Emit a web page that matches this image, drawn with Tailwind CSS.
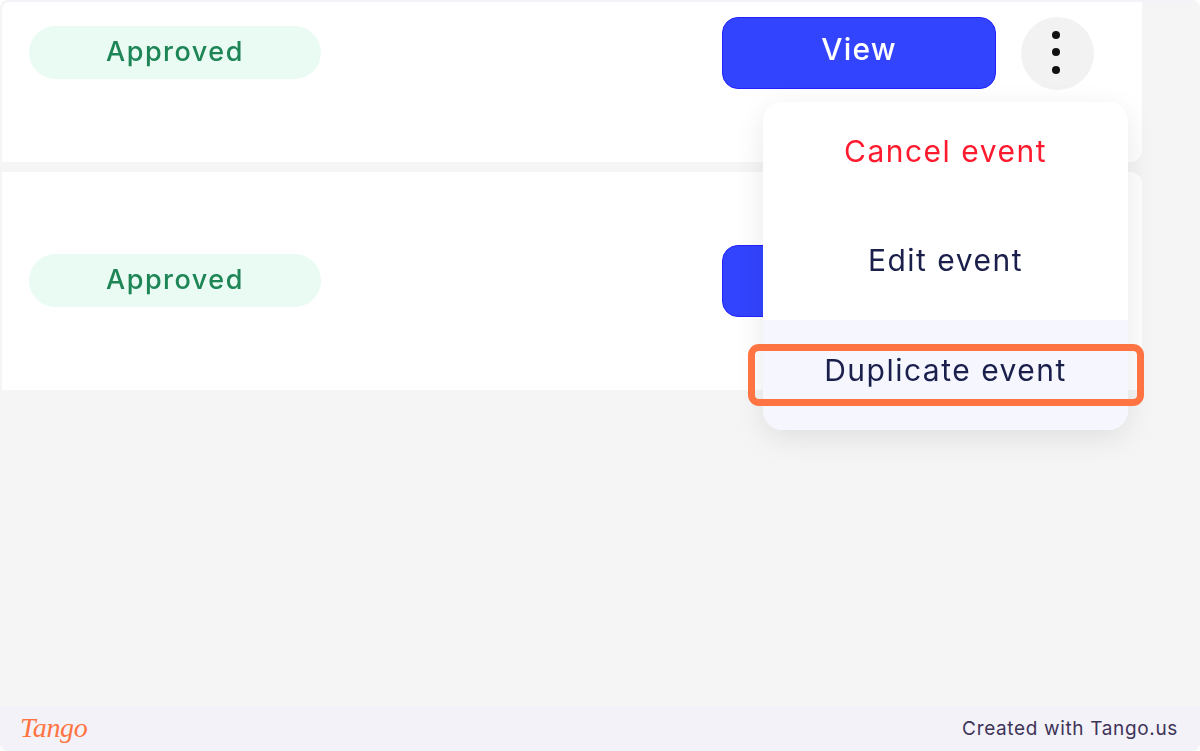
<!DOCTYPE html>
<html lang="en">
  <head>
    <meta charset="UTF-8" />
    <meta name="viewport" content="width=device-width, initial-scale=1.0" />
    <title>Duplicate event</title>
    <script src="https://cdn.jsdelivr.net/npm/@tailwindcss/browser@4"></script>
  </head>
  <body class="bg-white font-['Inter',sans-serif]">
    <div class="relative flex h-[751px] w-[1200px] flex-col overflow-hidden rounded-lg bg-[#f5f5f5]">
      <!-- event list -->
      <div class="flex-1 pl-[2px] pt-[2px] shadow-[inset_0_2px_0_#f3f3f8]">
        <div class="flex h-[160px] w-[1140px] items-start rounded-tl-lg rounded-br-xl bg-white pl-[27px] pr-12 pt-[15px]">
          <span class="mt-[9px] flex h-[53px] w-[292px] items-center justify-center rounded-full bg-[#e9fbf2] pb-[1px] text-[27px] font-medium tracking-[1.5px] text-[#1e8557] blur-[0.5px]">Approved</span>
          <button class="ml-auto flex h-[72px] w-[274px] items-center justify-center rounded-2xl border border-[#2222ff] bg-[#3344ff] pb-[8px] text-[30px] font-medium tracking-[1.2px] text-white blur-[0.4px]">View</button>
          <button class="ml-[25px] flex h-[73px] w-[73px] flex-col items-center justify-center gap-[9.5px] rounded-full bg-[#f2f2f2] pb-[3px] pr-[3px]">
            <span class="h-2 w-2 rounded-full bg-[#111111]"></span>
            <span class="h-2 w-2 rounded-full bg-[#111111]"></span>
            <span class="h-2 w-2 rounded-full bg-[#111111]"></span>
          </button>
        </div>
        <div class="mt-[10px] flex h-[218px] w-[1140px] items-start rounded-tr-xl bg-white pl-[27px] pr-12 pt-[73px]">
          <span class="mt-[9px] flex h-[53px] w-[292px] items-center justify-center rounded-full bg-[#e9fbf2] pb-[1px] text-[27px] font-medium tracking-[1.5px] text-[#1e8557] blur-[0.5px]">Approved</span>
          <button class="ml-auto h-[72px] w-[274px] rounded-2xl border border-[#2222ff] bg-[#3344ff]"></button>
          <button class="ml-[25px] h-[73px] w-[73px] rounded-full bg-[#f2f2f2]"></button>
        </div>
      </div>

      <!-- footer -->
      <div class="flex h-[45px] items-center justify-between bg-[#f3f2f8] pl-5 pr-[22px]">
        <span class="pb-[2px] font-['Liberation_Serif',serif] text-[28px] leading-none tracking-[-0.3px] text-[#ff7442] italic">Tango</span>
        <span class="pt-[2px] text-[19px] tracking-[0.65px] text-[#3e3458]">Created with Tango.us</span>
      </div>

      <!-- dropdown menu -->
      <div class="absolute left-[763px] top-[102px] w-[365px] overflow-hidden rounded-[20px] bg-white text-center text-[30px] tracking-[1.5px] text-[#1a1f4b] shadow-[0_8px_30px_rgba(0,0,0,0.09)] blur-[0.5px]">
        <div class="flex h-[109px] items-center justify-center pb-[10px] text-[#ff1a2e]">Cancel event</div>
        <div class="flex h-[109px] items-center justify-center pb-[10px]">Edit event</div>
        <div class="flex h-[110px] items-center justify-center bg-[#f5f6fe] pb-[10px]">Duplicate event</div>
      </div>

      <!-- step highlight -->
      <div class="absolute left-[748px] top-[344px] h-[62px] w-[396px] rounded-[11px] border-[7px] border-[#ff7442]"></div>
    </div>
  </body>
</html>
